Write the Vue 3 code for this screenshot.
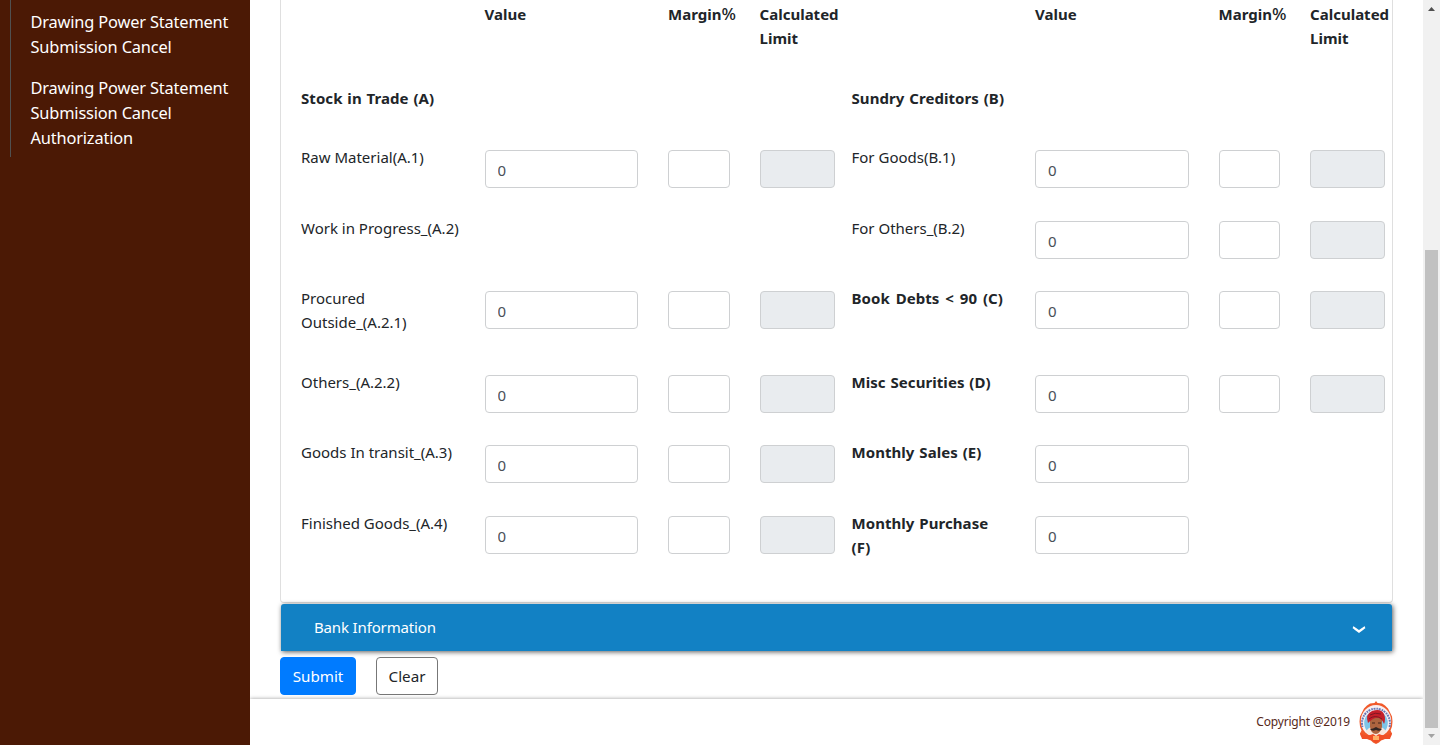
<script setup>
const rows = [
  { kind: 'head' },
  { left: { label: 'Stock in Trade (A)', bold: true, wide: true }, right: { label: 'Sundry Creditors (B)', bold: true, wide: true }, kind: 'title' },
  { left: { label: 'Raw Material(A.1)', value: true, margin: true }, right: { label: 'For Goods(B.1)', value: true, margin: true } },
  { left: { label: 'Work in Progress_(A.2)', wide: true }, right: { label: 'For Others_(B.2)', value: true, margin: true } },
  { left: { label: 'Procured Outside_(A.2.1)', value: true, margin: true }, right: { label: 'Book Debts < 90 (C)', bold: true, debts: true, value: true, margin: true }, kind: 'tall' },
  { left: { label: 'Others_(A.2.2)', value: true, margin: true }, right: { label: 'Misc Securities (D)', bold: true, value: true, margin: true } },
  { left: { label: 'Goods In transit_(A.3)', value: true, margin: true }, right: { label: 'Monthly Sales (E)', bold: true, value: true } },
  { left: { label: 'Finished Goods_(A.4)', value: true, margin: true }, right: { label: 'Monthly Purchase (F)', bold: true, value: true } }
]
</script>

<template>
  <div class="app">
    <nav class="side">
      <ul>
        <li>Drawing Power Statement<br>Submission Cancel</li>
        <li>Drawing Power Statement<br>Submission Cancel<br>Authorization</li>
      </ul>
    </nav>
    <div class="main">
      <main class="content">
        <section class="card">
          <div v-for="(row, i) in rows" :key="i" class="row" :class="row.kind">
            <div v-for="side in ['left', 'right']" :key="side" class="half">
              <template v-if="row.kind === 'head'">
                <span></span><b>Value</b><b>Margin<span class="pct">%</span></b><b>Calculated<br>Limit</b>
              </template>
              <template v-else>
                <div class="label" :class="{ bold: row[side].bold, wide: row[side].wide, debts: row[side].debts }">{{ row[side].label }}</div>
                <input v-if="row[side].value" type="text" value="0" class="value">
                <input v-if="row[side].margin" type="text" class="margin">
                <input v-if="row[side].margin" type="text" class="calc" disabled>
              </template>
            </div>
          </div>
        </section>
        <div class="bank">
          <span>Bank Information</span>
          <svg width="14" height="8" viewBox="0 0 14 8"><path d="M.9 1.3 Q2.2 1.5 3.4 2.9 L7 5.5 L10.6 2.9 Q11.8 1.5 13.1 1.3" fill="none" stroke="#fff" stroke-width="2.3" /></svg>
        </div>
        <div class="actions">
          <button class="submit">Submit</button>
          <button class="clear">Clear</button>
        </div>
      </main>
      <footer>
        <span>Copyright @2019</span>
        <svg class="emblem" width="36" height="43" viewBox="0 0 36 43">
          <path d="M18 0l1.5 2 4.5 .5 3 2 3 3 2 4 2 4 .5 5-.5 5-1.5 4 1.5 3-1 3-4 1-3 2-3 1-2 2-3 1.5-3-1.5-2-2-3-1-3-2-4-1-1-3 1.5-3-1.5-4-.5-5 .5-5 2-4 2-4 3-3 3-2 4.500-.5z" fill="#f15a2b" />
          <ellipse cx="18" cy="20" rx="15.2" ry="16" fill="#f7eef0" />
          <path d="M4.500 26A14 14.500 0 1 1 31.500 26" fill="none" stroke="#6675b5" stroke-width="2" stroke-dasharray="1.5 .8 2 1" />
          <ellipse cx="18" cy="22" rx="11.8" ry="12" fill="#7cc5e8" />
          <path d="M8 31q2-5 7-5h6q5 0 7 5-4 5-10 5T8 31z" fill="#f8e6dc" />
          <path d="M12 17q6-3 12 0v9q-2 7-6 7-5 0-6-7z" fill="#ad643f" />
          <path d="M10 22q-3-9 4-12 9-3 12 3 2 5 0 10-2-5-5-6-5-1-11 5z" fill="#c51f2a" />
          <path d="M11 18q6-5 13 0M12 14q5-3 11-1" stroke="#811722" fill="none" />
          <path d="M14 22h3m3 0h3" stroke="#45251b" stroke-width="1.2" />
          <path d="M12 28q3 0 6-2 3 2 6 2-2 3-6 1-4 2-6-1z" fill="#332522" />
          <path d="M2 32q7 4 13 1l3 2 3-2q6 3 13-1l-2 6-7 0-4 2-3 2-3-2-4-2-7 0z" fill="#f04f26" />
          <path d="M15 35h6v4h-6z" fill="#ffae65" />
        </svg>
      </footer>
    </div>
    <div class="scroll">
      <svg width="17" height="17" viewBox="0 0 17 17"><path d="M5 11l3.5-4 3.5 4z" fill="#505050" /></svg>
      <i></i>
      <svg width="17" height="17" viewBox="0 0 17 17"><path d="M5 6h7l-3.5 4z" fill="#a3a3a3" /></svg>
    </div>
  </div>
</template>

<style>
body { margin: 0; overflow: hidden; }
</style>

<style scoped>
* { box-sizing: border-box; }
.app { display: flex; width: 1440px; height: 745px; overflow: hidden; background: #fff; color: #212529; font: 15px/24px "Noto Sans", "Open Sans", sans-serif; }
.side { width: 250px; flex: none; background: #4b1905; color: #fff; padding-left: 10px; }
ul { list-style: none; margin: 0; padding: 9px 0 0 19.5px; height: 157px; border-left: 1px solid #505050; font-size: 16.4px; line-height: 25px; white-space: nowrap; letter-spacing: -.17px; }
li { margin-bottom: 16px; }
.main { width: 1173px; display: flex; flex-direction: column; overflow: hidden; }
.content { height: 699px; padding: 0 30px; }
.card { height: 603px; width: 1113px; border: 1px solid #dfdfdf; border-top: 0; border-radius: 0 0 4px 4px; padding: 1.9px 0 0 20px; }
.row { display: flex; height: 70.4px; }
.head, .tall { height: 84px; }
.title { height: 59.3px; }
.half { width: 550.5px; flex: none; display: grid; grid-template-columns: 183.5px 183.6px 91.5px 91.9px; align-items: start; white-space: nowrap; }
b, .bold { font-weight: 700; }
.bold { letter-spacing: .06px; word-spacing: .9px; }
.debts { word-spacing: 1.9px; }
.pct { font-weight: 500; font-size: 17px; line-height: 1; }
.label { width: 153.4px; white-space: normal; }
.wide { width: 183px; white-space: nowrap; }
input { height: 38px; margin: 5px 0 0; border: 1px solid #ced0d2; border-radius: 4px; background: #fff; color: #495057; padding: 8px 12px 6px; font: 15px/22px "Noto Sans", sans-serif; }
.value { width: 153.5px; }
.margin { width: 61.7px; }
.calc { width: 75px; background: #e9ecef; }
.bank { height: 47px; width: 1111px; margin: 1px 0 0 1px; border-radius: 3px 3px 0 0; background: #1281c4; box-shadow: 1px 1px 5px rgba(0,0,0,.65); color: #fff; display: flex; align-items: center; justify-content: space-between; padding: 0 26px 2px 33px; }
.bank span { letter-spacing: -.15px; }
.bank svg { margin-top: 6px; }
.actions { display: flex; gap: 20px; padding-top: 6px; }
button { height: 38px; padding: 0; border-radius: 4px; font: 15.2px/24px "Noto Sans", sans-serif; }
.submit { width: 76px; border: 1px solid #007bff; background: #007bff; color: #fff; }
.clear { width: 62px; border: 1px solid #777; background: #fff; color: #212529; }
footer { height: 46px; background: #fff; box-shadow: 0 0 4px rgba(0,0,0,.4); display: flex; align-items: center; justify-content: flex-end; padding-right: 29px; color: #57291a; font-size: 12px; letter-spacing: -.2px; gap: 8px; }
.emblem { display: block; margin-top: 1px; }
.scroll { width: 17px; background: #f1f1f1; display: flex; flex-direction: column; }
.scroll svg { display: block; flex: none; }
.scroll i { display: block; height: 478px; width: 13px; margin: 233px 0 0 2px; background: #c1c1c1; }
</style>
